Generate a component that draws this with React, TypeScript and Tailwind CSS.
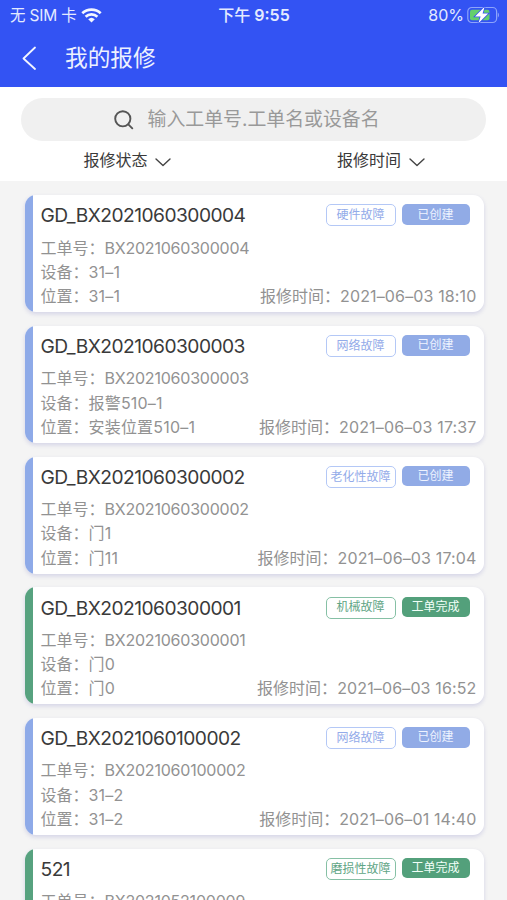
import React from "react";

type Tone = "blue" | "green";

interface Order {
  title: string;
  code: string;
  device: string;
  place: string;
  time: string;
  fault: string;
  status: string;
  tone: Tone;
}

const orders: Order[] = [
  { title: "GD_BX2021060300004", code: "BX2021060300004", device: "31–1", place: "31–1", time: "2021–06–03 18:10", fault: "硬件故障", status: "已创建", tone: "blue" },
  { title: "GD_BX2021060300003", code: "BX2021060300003", device: "报警510–1", place: "安装位置510–1", time: "2021–06–03 17:37", fault: "网络故障", status: "已创建", tone: "blue" },
  { title: "GD_BX2021060300002", code: "BX2021060300002", device: "门1", place: "门11", time: "2021–06–03 17:04", fault: "老化性故障", status: "已创建", tone: "blue" },
  { title: "GD_BX2021060300001", code: "BX2021060300001", device: "门0", place: "门0", time: "2021–06–03 16:52", fault: "机械故障", status: "工单完成", tone: "green" },
  { title: "GD_BX2021060100002", code: "BX2021060100002", device: "31–2", place: "31–2", time: "2021–06–01 14:40", fault: "网络故障", status: "已创建", tone: "blue" },
  { title: "521", code: "BX2021052100009", device: "", place: "", time: "", fault: "磨损性故障", status: "工单完成", tone: "green" },
];

const tones: Record<Tone, { bar: string; outline: string; solid: string }> = {
  blue: { bar: "bg-[#8eaae8]", outline: "border-[#b4c8f6] text-[#93abe9]", solid: "bg-[#91abe6] text-[#eef3ff]" },
  green: { bar: "bg-[#57a27f]", outline: "border-[#86c0a5] text-[#5fa585]", solid: "bg-[#53a07b] text-[#f2fff8]" },
};

function StatusBar() {
  return (
    <div className="flex h-[30px] items-center justify-between pl-[10px] pr-[8px] text-[16px] text-[#e4eaff]">
      <div className="flex w-[150px] items-center">
        <span className="whitespace-nowrap pt-[1px] text-[15.5px] tracking-[-0.2px]">无 SIM 卡</span>
        <svg className="ml-[5px] h-[15px] w-[21px]" viewBox="0 0 21 15" fill="none" stroke="#f3f6ff" strokeWidth="2.7">
          <path d="M1.3 5.3a13.4 13.4 0 0 1 18.4 0" />
          <path d="M4.6 8.8a8.6 8.6 0 0 1 11.8 0" />
          <path d="M10.5 14.6 7.2 11.3a4.8 4.8 0 0 1 6.6 0z" fill="#f3f6ff" stroke="none" />
        </svg>
      </div>
      <span className="whitespace-nowrap pr-[1px] font-semibold">
        <span className="font-medium">下午</span> 9:55
      </span>
      <div className="flex w-[150px] items-center justify-end">
        <span className="text-[16px]">80%</span>
        <svg className="ml-[3px] h-[18px] w-[32px]" viewBox="0 0 32 18">
          <rect x="0.8" y="1.5" width="28.8" height="15" rx="4" fill="none" stroke="#8da4fb" strokeWidth="1.2" />
          <path d="M30.8 6.5c1.5.7 1.5 4.3 0 5z" fill="#8da4fb" />
          <rect x="3" y="3.7" width="19.5" height="10.6" rx="2" fill="#64cf6d" />
          <path d="M17.6 0.8 8 10.4h5.6L11.4 17.2 21.2 7.6h-5.6z" fill="#3452f0" stroke="#3452f0" strokeWidth="1.6" />
          <path d="M17.6 0.8 8 10.4h5.6L11.4 17.2 21.2 7.6h-5.6z" fill="#fff" />
        </svg>
      </div>
    </div>
  );
}

function Filter({ label }: { label: string }) {
  return (
    <div className="flex flex-1 items-center justify-center pl-[1px] text-[16px] text-[#3a3a3a]">
      <span>{label}</span>
      <svg className="ml-[7.5px] mt-[4px] h-[9px] w-[16px]" viewBox="0 0 16 9" fill="none" stroke="#444" strokeWidth="1.4">
        <path d="m1 1 7 6.6L15 1" strokeLinecap="round" strokeLinejoin="round" />
      </svg>
    </div>
  );
}

function OrderCard({ order }: { order: Order }) {
  const tone = tones[order.tone];
  return (
    <article className="flex h-[117px] shrink-0 overflow-hidden rounded-[11px] bg-white shadow-[0_2px_4px_rgba(110,110,190,0.24)]">
      <div className={`w-[8.5px] shrink-0 ${tone.bar}`} />
      <div className="flex min-w-0 flex-1 flex-col pl-[7.5px] pr-[7px] text-[16px] leading-[24.3px] text-[#929292]">
        <div className="flex h-[40.5px] items-center justify-between pr-[7px]">
          <h2 className="text-[19.2px] leading-[24px] tracking-[-0.53px] text-[#3a3a3a]">{order.title}</h2>
          <div className="flex items-start gap-[6px] text-[12px]">
            <span className={`flex h-[22px] w-[70px] items-center justify-center whitespace-nowrap rounded-[5px] border ${tone.outline}`}>{order.fault}</span>
            <span className={`flex h-[20.5px] w-[68px] items-center justify-center whitespace-nowrap rounded-[5px] ${tone.solid}`}>{order.status}</span>
          </div>
        </div>
        <p>
          工单号：<span className="tracking-[-0.22px]">{order.code}</span>
        </p>
        {order.device && (
          <p>
            设备：<span className="tracking-[0.2px]">{order.device}</span>
          </p>
        )}
        {order.place && (
          <div className="flex justify-between whitespace-nowrap">
            <span>
              位置：<span className="tracking-[0.2px]">{order.place}</span>
            </span>
            <span>
              报修时间：<span className="tracking-[0.14px]">{order.time}</span>
            </span>
          </div>
        )}
      </div>
    </article>
  );
}

export default function App() {
  return (
    <main lang="zh-CN" className="flex h-[900px] w-[507px] flex-col overflow-hidden bg-[#f4f4f4] font-['Inter','Noto_Sans_CJK_SC',sans-serif]">
      <header className="h-[87px] shrink-0 bg-[#3353f3]">
        <StatusBar />
        <div className="flex h-[56px] items-center pl-[22px]">
          <svg className="h-[24px] w-[14px]" viewBox="0 0 14 24" fill="none" stroke="#f2f5ff" strokeWidth="1.8">
            <path d="M13 1.5 1.5 12.5 13 23" strokeLinecap="round" strokeLinejoin="round" />
          </svg>
          <h1 className="ml-[29px] text-[22.7px] leading-[30px] text-[#edf1ff]">我的报修</h1>
        </div>
      </header>
      <section className="h-[94px] shrink-0 bg-white px-[21px] pt-[11px]">
        <div className="flex h-[43px] items-center rounded-full bg-[#f0f0f0] pl-[93px]">
          <svg className="h-[20px] w-[20px]" viewBox="0 0 20 20" fill="none" stroke="#555" strokeWidth="1.9">
            <circle cx="8.8" cy="8.8" r="7.6" />
            <path d="m14.3 14.3 4 4" strokeLinecap="round" />
          </svg>
          <span className="ml-[13.5px] pt-[2px] text-[18.9px] text-[#999]">输入工单号.工单名或设备名</span>
        </div>
        <div className="-mx-[21px] flex h-[38px] items-center">
          <Filter label="报修状态" />
          <Filter label="报修时间" />
        </div>
      </section>
      <div className="flex flex-col gap-[13.7px] pl-[24.5px] pr-[23.5px] pt-[14.2px]">
        {orders.map((order) => (
          <OrderCard key={order.title} order={order} />
        ))}
      </div>
    </main>
  );
}
